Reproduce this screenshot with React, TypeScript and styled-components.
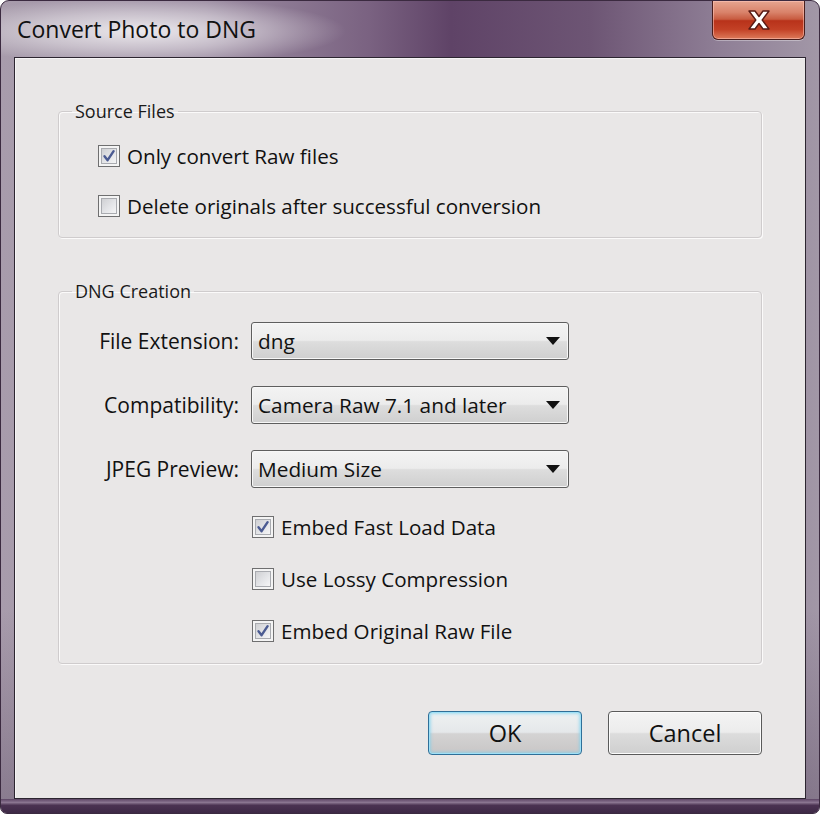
import React from "react";
import styled, { createGlobalStyle } from "styled-components";

const GlobalStyle = createGlobalStyle`
  html, body { margin: 0; padding: 0; background: #ffffff; }
  body { font-family: "Open Sans", "Liberation Sans", Arial, sans-serif; }
`;

const Window = styled.div`
  width: 820px;
  height: 814px;
  box-sizing: border-box;
  border: 1px solid #3b2a40;
  border-radius: 9px 9px 7px 7px;
  overflow: hidden;
  display: flex;
  flex-direction: column;
  background:
    linear-gradient(180deg, rgba(0,0,0,0) 0%, rgba(0,0,0,0) 75%, rgba(40,20,50,0.25) 100%),
    linear-gradient(90deg, #a89cac 0%, #9d8ea3 25%, #7a6281 45%, #5f4367 55%, #6d5574 72%, #8f7f96 88%, #a297a7 100%);
`;

const TitleBar = styled.div`
  height: 56px;
  flex: none;
  display: flex;
  justify-content: space-between;
  align-items: flex-start;
  padding: 0 14px 0 16px;
  background: radial-gradient(ellipse 205px 34px at 140px 30px, rgba(255,255,255,0.8), rgba(255,255,255,0.4) 55%, rgba(255,255,255,0) 100%);
`;

const Title = styled.div`
  margin-top: 14px;
  font-family: "Open Sans", "Liberation Sans", Arial, sans-serif;
  font-size: 23px;
  line-height: 28px;
  color: #111;
`;

const CloseButton = styled.div`
  width: 93px;
  height: 39px;
  box-sizing: border-box;
  border: 1px solid #4a1e1c;
  border-top: none;
  border-radius: 0 0 6px 6px;
  display: flex;
  align-items: center;
  justify-content: center;
  box-shadow: inset 0 0 0 1px rgba(255,200,190,0.55), 0 1px 0 rgba(255,255,255,0.35);
  background: linear-gradient(180deg, #e6a590 0%, #d9826a 30%, #c85b40 48%, #b8321a 52%, #c34126 75%, #dd7a5a 100%);
`;

const Client = styled.div`
  flex: 1;
  margin: 0 13px;
  border: 1px solid #2c2530;
  background: #e9e7e7;
  box-shadow: inset 1px 1px 0 #f6f4f5;
  display: flex;
  flex-direction: column;
  padding: 43px 43px 43px 43px;
`;

const BottomFrame = styled.div`
  height: 14px;
  flex: none;
  background: linear-gradient(180deg, #5d4565 0%, #8a7590 25%, #4a3251 45%, #3e2946 100%);
`;

const Group = styled.fieldset<{ $bottom: number }>`
  margin: 0 0 ${(p) => p.$bottom}px 0;
  padding: 0 0 6px 0;
  min-width: 0;
  border: 1px solid #cfcccd;
  border-radius: 4px;
  box-shadow: inset 1px 1px 0 #fbfafa, 1px 1px 0 #fbfafa;
`;

const Legend = styled.legend`
  margin-left: 13px;
  padding: 0 3px;
  font-family: "Open Sans", "Liberation Sans", Arial, sans-serif;
  font-size: 18px;
  line-height: 20px;
  color: #1a1a1a;
`;

const GroupBody = styled.div<{ $top: number }>`
  padding-top: ${(p) => p.$top}px;
  display: flex;
  flex-direction: column;
`;

const CheckRow = styled.label<{ $indent: number; $h: number }>`
  display: flex;
  align-items: center;
  gap: 7px;
  height: ${(p) => p.$h}px;
  padding-left: ${(p) => p.$indent}px;
  font-family: "Open Sans", "Liberation Sans", Arial, sans-serif;
  font-size: 20.6px;
  color: #111;
`;

const Box = styled.span`
  width: 22px;
  height: 22px;
  box-sizing: border-box;
  border: 1px solid #6f6f70;
  background: #f4f4f4;
  display: flex;
  align-items: center;
  justify-content: center;
  flex: none;
`;

const BoxInner = styled.span`
  width: 16px;
  height: 16px;
  box-sizing: border-box;
  border: 1px solid #a9abb0;
  background: linear-gradient(135deg, #cfd0d3 0%, #e4e5e8 55%, #f5f5f6 100%);
  display: flex;
  align-items: center;
  justify-content: center;
`;

const SelectRow = styled.div`
  display: flex;
  align-items: center;
  height: 64px;
  gap: 12px;
`;

const FieldLabel = styled.span`
  width: 180px;
  text-align: right;
  font-family: "Open Sans", "Liberation Sans", Arial, sans-serif;
  font-size: 21px;
  color: #111;
`;

const Select = styled.div`
  width: 318px;
  height: 38px;
  box-sizing: border-box;
  border: 1px solid #5e5e5e;
  border-radius: 3px;
  box-shadow: inset 0 0 0 1px #f7f7f7;
  background: linear-gradient(180deg, #f3f3f3 0%, #ececec 48%, #dddddd 52%, #cfcfcf 100%);
  display: flex;
  align-items: center;
  justify-content: space-between;
  padding: 0 8px 0 6px;
  font-family: "Open Sans", "Liberation Sans", Arial, sans-serif;
  font-size: 20.8px;
  color: #111;
`;

const ButtonBar = styled.div`
  margin-top: auto;
  display: flex;
  justify-content: flex-end;
  gap: 26px;
`;

const Button = styled.div<{ $focused?: boolean }>`
  width: 154px;
  height: 44px;
  box-sizing: border-box;
  border: 1px solid ${(p) => (p.$focused ? "#2f6f98" : "#5a5a5a")};
  border-radius: 4px;
  display: flex;
  align-items: center;
  justify-content: center;
  font-family: "Open Sans", "Liberation Sans", Arial, sans-serif;
  font-size: 23.5px;
  color: #111;
  box-shadow: ${(p) =>
    p.$focused
      ? "inset 0 0 0 1px #9ee0f7, inset 0 0 3px 2px rgba(120,210,240,0.6)"
      : "inset 0 0 0 1px #fcfcfc"};
  background: ${(p) =>
    p.$focused
      ? "linear-gradient(180deg, #eef1f2 0%, #e5e8ea 48%, #d4d3d3 52%, #c8c6c6 100%)"
      : "linear-gradient(180deg, #f4f4f4 0%, #ececec 48%, #dcdcdc 52%, #cfcfcf 100%)"};
`;

const Check = () => (
  <svg width="14" height="14" viewBox="0 0 14 14">
    <path d="M2.5 7.2 L5.6 11.2 L11.6 2.2" fill="none" stroke="#4b5b92" strokeWidth="2.4" strokeLinejoin="round" strokeLinecap="round" />
  </svg>
);

const CheckBox = ({ checked }: { checked?: boolean }) => (
  <Box>
    <BoxInner>{checked ? <Check /> : null}</BoxInner>
  </Box>
);

const Arrow = () => (
  <svg width="14" height="8" viewBox="0 0 14 8">
    <path d="M0 0 H14 L7 8 Z" fill="#111" />
  </svg>
);

const CloseX = () => (
  <svg width="26" height="22" viewBox="0 0 26 22">
    <path
      d="M3 2 H9 L13 7.5 L17 2 H23 L16.2 11 L23 20 H17 L13 14.5 L9 20 H3 L9.8 11 Z"
      fill="#ffffff"
      stroke="#5a1a14"
      strokeWidth="1.4"
      strokeLinejoin="round"
    />
  </svg>
);

export default function App() {
  return (
    <>
      <GlobalStyle />
      <Window>
        <TitleBar>
          <Title>Convert Photo to DNG</Title>
          <CloseButton>
            <CloseX />
          </CloseButton>
        </TitleBar>
        <Client>
          <Group $bottom={43}>
            <Legend>Source Files</Legend>
            <GroupBody $top={10}>
              <CheckRow $indent={39} $h={50}>
                <CheckBox checked />
                Only convert Raw files
              </CheckRow>
              <CheckRow $indent={39} $h={50}>
                <CheckBox />
                Delete originals after successful conversion
              </CheckRow>
            </GroupBody>
          </Group>
          <Group $bottom={0}>
            <Legend>DNG Creation</Legend>
            <GroupBody $top={8}>
              <SelectRow>
                <FieldLabel>File Extension:</FieldLabel>
                <Select>
                  dng
                  <Arrow />
                </Select>
              </SelectRow>
              <SelectRow>
                <FieldLabel>Compatibility:</FieldLabel>
                <Select>
                  Camera Raw 7.1 and later
                  <Arrow />
                </Select>
              </SelectRow>
              <SelectRow>
                <FieldLabel>JPEG Preview:</FieldLabel>
                <Select>
                  Medium Size
                  <Arrow />
                </Select>
              </SelectRow>
              <CheckRow $indent={193} $h={52}>
                <CheckBox checked />
                Embed Fast Load Data
              </CheckRow>
              <CheckRow $indent={193} $h={52}>
                <CheckBox />
                Use Lossy Compression
              </CheckRow>
              <CheckRow $indent={193} $h={52}>
                <CheckBox checked />
                Embed Original Raw File
              </CheckRow>
            </GroupBody>
          </Group>
          <ButtonBar>
            <Button $focused>OK</Button>
            <Button>Cancel</Button>
          </ButtonBar>
        </Client>
        <BottomFrame />
      </Window>
    </>
  );
}
